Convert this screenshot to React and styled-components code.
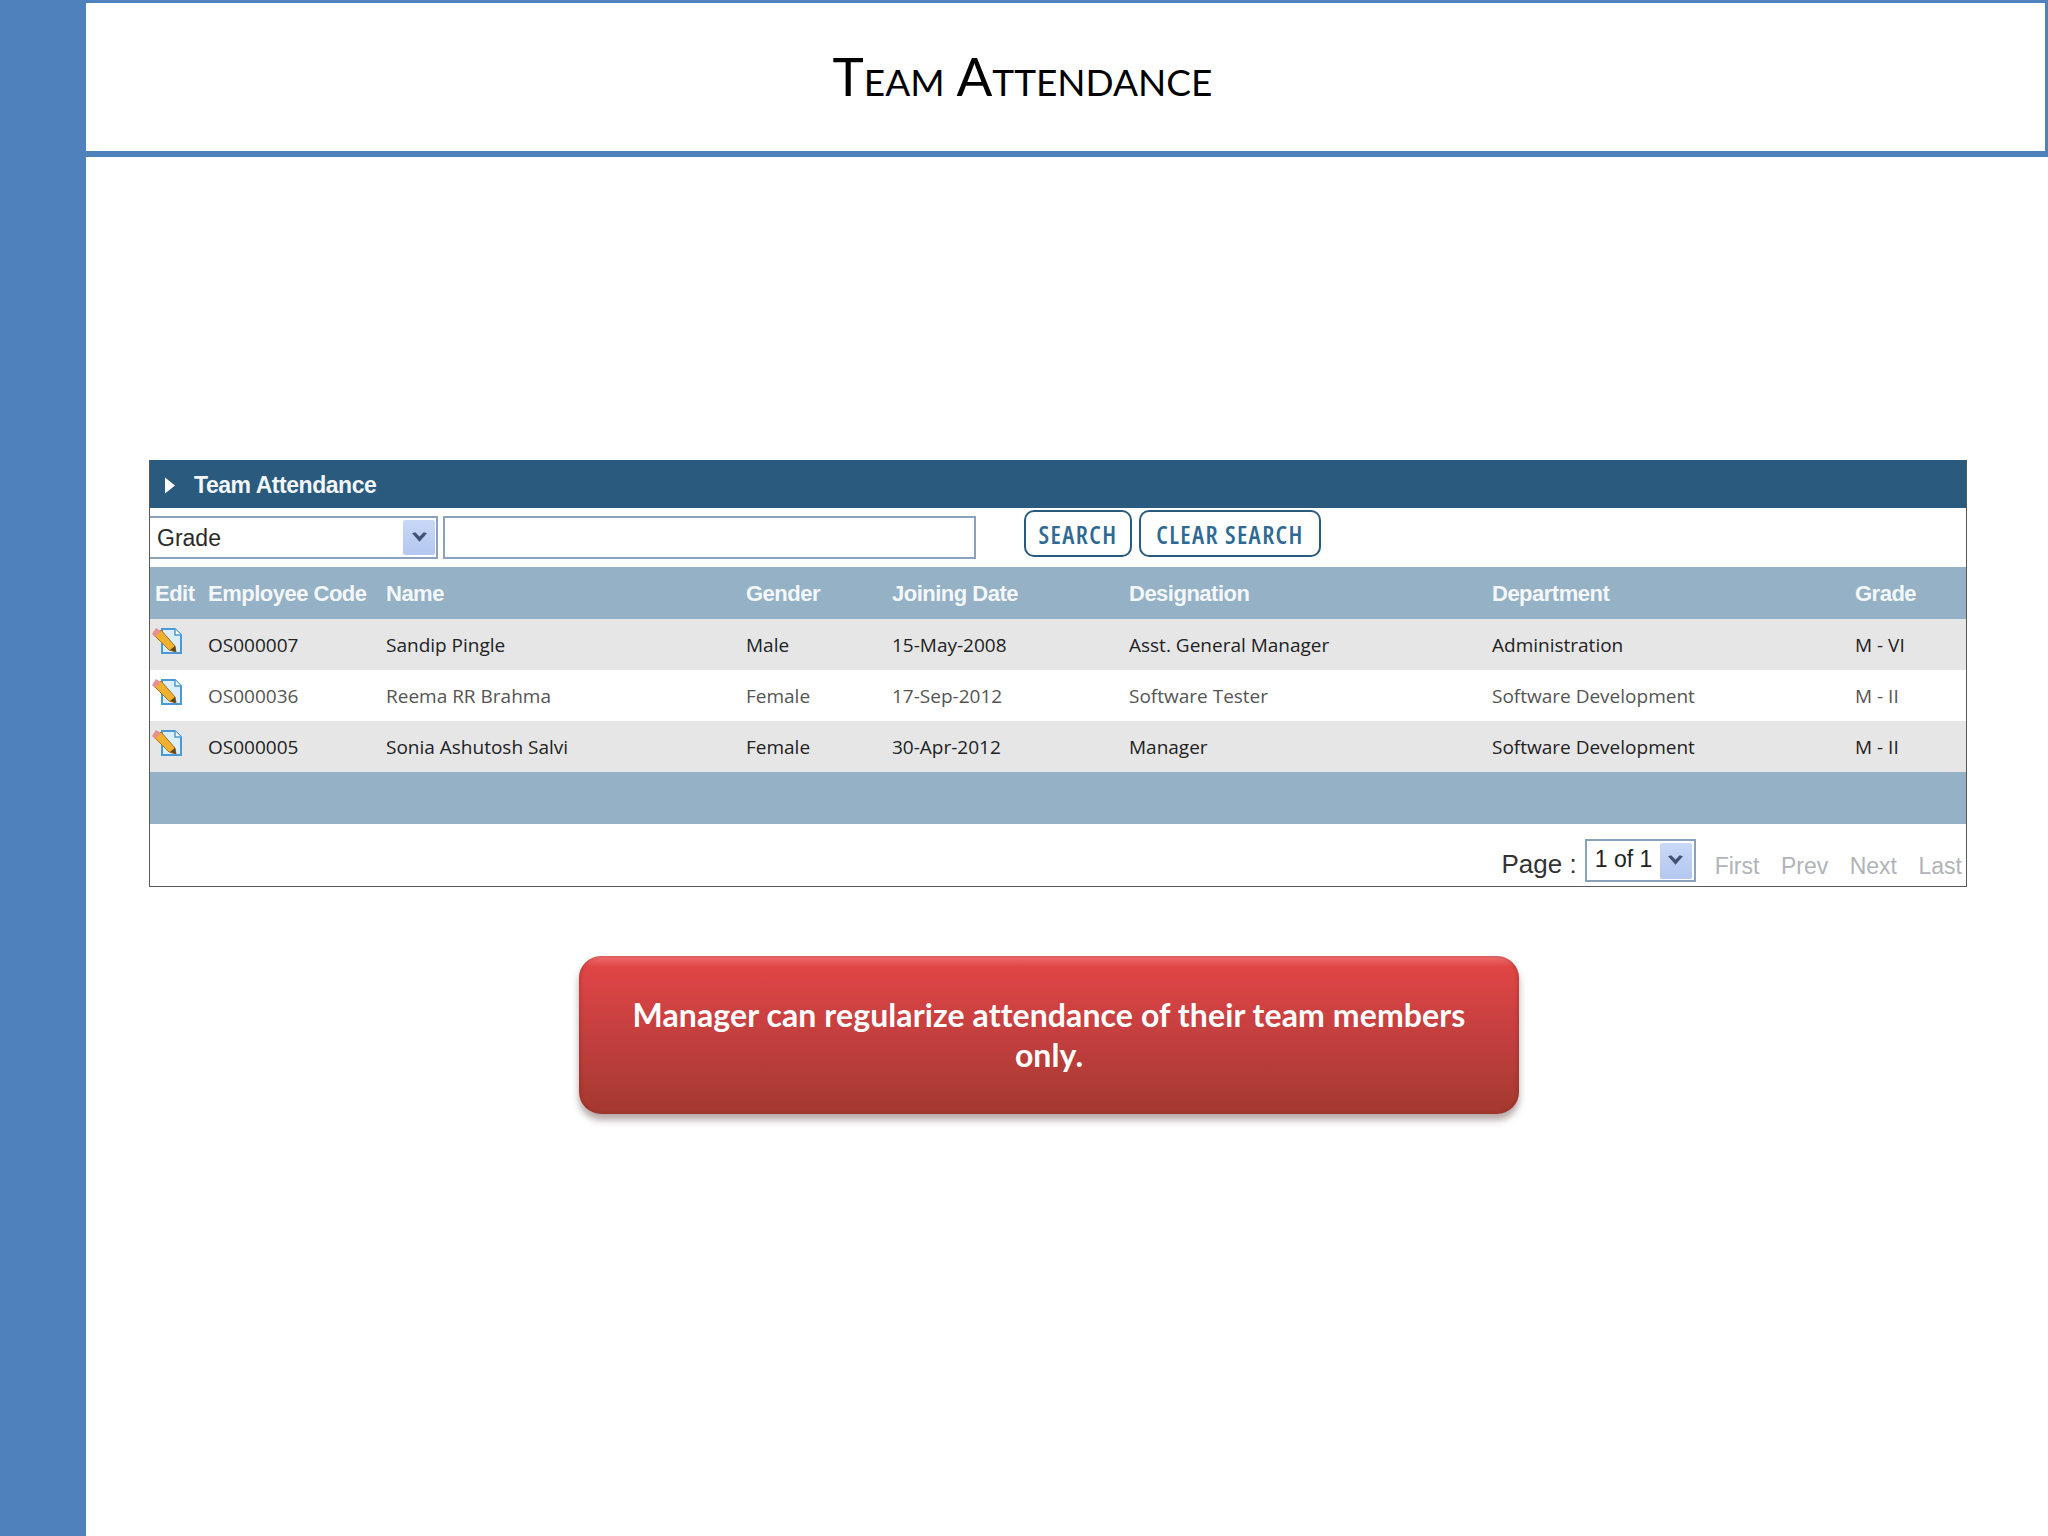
import React from 'react';
import styled, { createGlobalStyle } from 'styled-components';

const columns = ['Edit', 'Employee Code', 'Name', 'Gender', 'Joining Date', 'Designation', 'Department', 'Grade'];

const employees = [
  { code: 'OS000007', name: 'Sandip Pingle', gender: 'Male', joined: '15-May-2008', designation: 'Asst. General Manager', department: 'Administration', grade: 'M - VI' },
  { code: 'OS000036', name: 'Reema RR Brahma', gender: 'Female', joined: '17-Sep-2012', designation: 'Software Tester', department: 'Software Development', grade: 'M - II' },
  { code: 'OS000005', name: 'Sonia Ashutosh Salvi', gender: 'Female', joined: '30-Apr-2012', designation: 'Manager', department: 'Software Development', grade: 'M - II' },
];

const GlobalStyle = createGlobalStyle`
  html, body {
    margin: 0;
    padding: 0;
    background: #fff;
  }
`;

const EditIcon = () => (
  <svg width="30" height="28" viewBox="0 0 30 28">
    <path d="M10 2h13l6 6v18H10z" fill="#dbeefb" stroke="#4a9ad8" strokeWidth="2" />
    <path d="M23 2v6h6" fill="#fff" stroke="#4a9ad8" strokeWidth="1.5" />
    <path d="M3 9l6-6 14 16 1 6-7-2z" fill="#f0b030" stroke="#a8701c" strokeWidth="1" />
    <path d="M0 7l4-6 5 3-6 6z" fill="#e88f8f" />
    <path d="M18 23l5-4 1 6z" fill="#5a4524" />
  </svg>
);

const Chevron = () => (
  <svg width="17" height="13" viewBox="0 0 16 12">
    <path d="M1 2l3-1 4 4 4-4 3 1-7 8z" fill="#3f5378" />
  </svg>
);

const Arrow = () => (
  <svg width="12" height="17" viewBox="0 0 12 16">
    <path d="M1 0l10 8-10 8z" fill="#fff" />
  </svg>
);

const App = () => {
  return (
    <>
      <GlobalStyle />
      <Slide>
        <Sidebar />
        <Main>
          <TitleBox>
            <Title>Team Attendance</Title>
          </TitleBox>

          <Panel>
            <PanelTitle>
              <Arrow />
              <span>Team Attendance</span>
            </PanelTitle>

            <Toolbar>
              <GradeSelect>
                <SelectText>Grade</SelectText>
                <DropButton><Chevron /></DropButton>
              </GradeSelect>
              <SearchInput />
              <Buttons>
                <ActionButton $width={108}>SEARCH</ActionButton>
                <ActionButton $width={182}>CLEAR SEARCH</ActionButton>
              </Buttons>
            </Toolbar>

            <HeadRow>
              {columns.map((c) => (
                <div key={c}>{c}</div>
              ))}
            </HeadRow>

            {employees.map((e, i) => (
              <Row key={e.code} $odd={i % 2 === 0}>
                <IconCell><EditIcon /></IconCell>
                <div>{e.code}</div>
                <div>{e.name}</div>
                <div>{e.gender}</div>
                <div>{e.joined}</div>
                <div>{e.designation}</div>
                <div>{e.department}</div>
                <div>{e.grade}</div>
              </Row>
            ))}

            <FootBand />

            <Pager>
              <PageLabel>Page :</PageLabel>
              <PageSelect>
                <PageValue>1 of 1</PageValue>
                <PageDrop><Chevron /></PageDrop>
              </PageSelect>
              <PagerLinks>
                <span>First</span>
                <span>Prev</span>
                <span>Next</span>
                <span>Last</span>
              </PagerLinks>
            </Pager>
          </Panel>

          <Callout>
            Manager can regularize attendance of their team members only.
          </Callout>
        </Main>
      </Slide>
    </>
  );
};

export default App;

const Slide = styled.div`
  display: flex;
  width: 2048px;
  height: 1536px;
  background: #fff;
  overflow: hidden;
`;

const Sidebar = styled.aside`
  width: 86px;
  flex-shrink: 0;
  background: #4f81bd;
`;

const Main = styled.main`
  flex: 1;
  display: flex;
  flex-direction: column;
`;

const TitleBox = styled.header`
  box-sizing: border-box;
  height: 157px;
  border: solid #4f81bd;
  border-width: 3px 3px 6px 0;
  display: flex;
  align-items: center;
  justify-content: center;
  padding: 0 86px 3px 0;
`;

const Title = styled.h1`
  margin: 0;
  font-family: 'Lato', sans-serif;
  font-size: 53px;
  font-weight: 400;
  font-variant: small-caps;
  color: #000;
`;

const Panel = styled.section`
  box-sizing: border-box;
  width: 1818px;
  height: 427px;
  margin: 303px 0 0 63px;
  border: 1px solid #5a5a5a;
  border-top: none;
  display: flex;
  flex-direction: column;
`;

const PanelTitle = styled.div`
  height: 48px;
  flex-shrink: 0;
  display: flex;
  align-items: center;
  gap: 18px;
  padding: 2px 0 0 14px;
  box-sizing: border-box;
  background: #2a5a7e;
  color: #f2f6f8;
  font-family: 'Liberation Sans', sans-serif;
  font-size: 23px;
  font-weight: 700;
  letter-spacing: -0.45px;
`;

const Toolbar = styled.div`
  height: 59px;
  flex-shrink: 0;
  box-sizing: border-box;
  display: flex;
  padding-top: 8px;
`;

const GradeSelect = styled.div`
  box-sizing: border-box;
  width: 288px;
  height: 43px;
  border: 2px solid #8aa2bc;
  border-left: none;
  display: flex;
  align-items: center;
  justify-content: space-between;
  padding: 0 1px 0 7px;
`;

const SelectText = styled.span`
  font-family: 'Liberation Sans', sans-serif;
  font-size: 23px;
  color: #2a2a2a;
  margin-top: 2px;
`;

const DropButton = styled.div`
  width: 32px;
  height: 35px;
  display: flex;
  align-items: center;
  justify-content: center;
  background: linear-gradient(#c9d8f6, #b3c7f0);
  border-radius: 2px;
`;

const SearchInput = styled.div`
  box-sizing: border-box;
  width: 533px;
  height: 43px;
  margin-left: 5px;
  border: 2px solid #8aa2bc;
`;

const Buttons = styled.div`
  display: flex;
  gap: 7px;
  margin: -6px 0 0 48px;
`;

const ActionButton = styled.button`
  box-sizing: border-box;
  width: ${(p) => p.$width}px;
  height: 47px;
  padding: 0;
  background: #fff;
  border: 2px solid #2a5a7e;
  border-radius: 10px;
  color: #2f6a94;
  font-family: 'Open Sans', sans-serif;
  font-size: 25px;
  font-weight: 600;
  font-stretch: condensed;
  letter-spacing: 1.4px;
`;

const HeadRow = styled.div`
  height: 52px;
  box-sizing: border-box;
  flex-shrink: 0;
  display: grid;
  grid-template-columns: 53px 178px 360px 146px 237px 363px 363px 1fr;
  align-items: center;
  padding: 2px 0 0 5px;
  background: #94b1c6;
  color: #f4f7f9;
  font-family: 'Liberation Sans', sans-serif;
  font-size: 22px;
  font-weight: 700;
  letter-spacing: -0.5px;
`;

const Row = styled.div`
  height: 51px;
  flex-shrink: 0;
  display: grid;
  grid-template-columns: 53px 178px 360px 146px 237px 363px 363px 1fr;
  align-items: center;
  padding-left: 5px;
  background: ${(p) => (p.$odd ? '#e6e6e7' : '#fff')};
  color: ${(p) => (p.$odd ? '#222' : '#555')};
  font-family: 'Open Sans', sans-serif;
  font-size: 19px;
`;

const IconCell = styled.div`
  display: flex;
  margin: -7px 0 0 -3px;
`;

const FootBand = styled.div`
  height: 52px;
  flex-shrink: 0;
  background: #94b1c6;
`;

const Pager = styled.div`
  flex: 1;
  display: flex;
  align-items: flex-end;
  justify-content: flex-end;
  padding: 0 4px 4px 0;
`;

const PageLabel = styled.span`
  font-family: 'Liberation Sans', sans-serif;
  font-size: 26px;
  color: #333;
  margin: 0 8px 2px 0;
`;

const PageSelect = styled.div`
  box-sizing: border-box;
  width: 111px;
  height: 43px;
  border: 2px solid #8aa2bc;
  display: flex;
  align-items: center;
  justify-content: space-between;
  padding: 0 2px 0 8px;
`;

const PageValue = styled.span`
  font-family: 'Liberation Sans', sans-serif;
  font-size: 23px;
  color: #222;
  margin-top: -2px;
`;

const PageDrop = styled(DropButton)`
  height: 36px;
`;

const PagerLinks = styled.div`
  display: flex;
  gap: 21.5px;
  margin: 0 0 2px 19px;
  font-family: 'Liberation Sans', sans-serif;
  font-size: 23px;
  color: #b0b4b8;
`;

const Callout = styled.div`
  box-sizing: border-box;
  width: 940px;
  height: 158px;
  margin: 69px 0 0 493px;
  padding: 0 50px;
  display: flex;
  align-items: center;
  justify-content: center;
  text-align: center;
  border-radius: 22px;
  background: linear-gradient(#ee6e6e 0, #e04545 7%, #c43f3f 50%, #a3392e 100%);
  box-shadow: 0 6px 7px rgba(90, 60, 60, 0.45), inset 2px 0 3px rgba(120, 40, 40, 0.25), inset -2px 0 3px rgba(120, 40, 40, 0.25);
  color: #fff;
  font-family: 'Lato', sans-serif;
  font-size: 32px;
  font-weight: 700;
  letter-spacing: 0.1px;
  line-height: 40px;
`;
